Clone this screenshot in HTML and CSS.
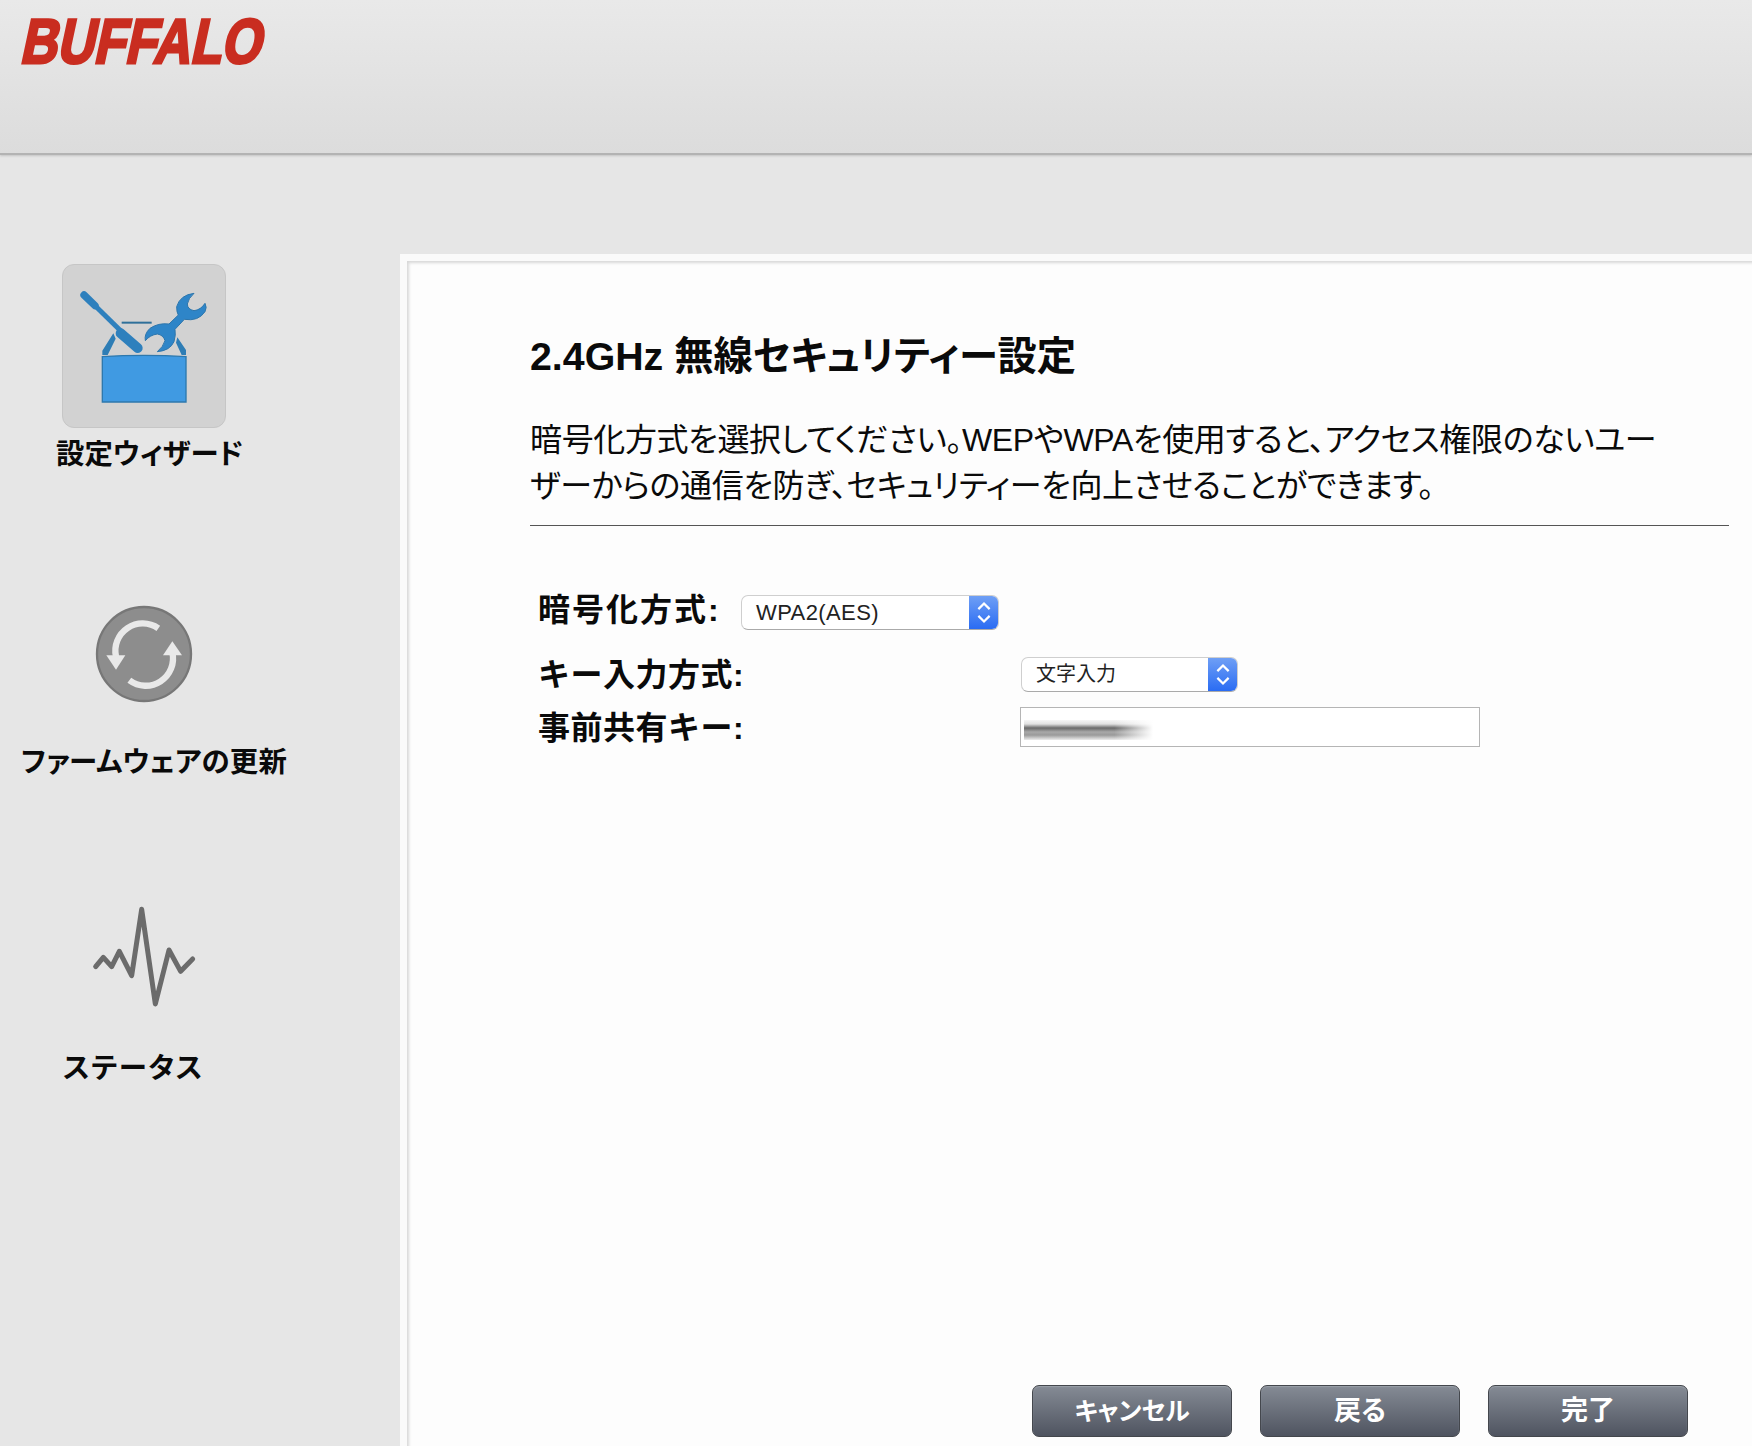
FILE: index.html
```html
<!DOCTYPE html>
<html lang="ja">
<head>
<meta charset="utf-8">
<title>2.4GHz 無線セキュリティー設定</title>
<link rel="stylesheet" href="styles.css">
</head>
<body>
<header class="topbar"><span class="logo">BUFFALO</span></header>
<div class="main">
  <nav class="sidebar">
    <div class="nav-item nav-wizard">
      <div class="icon-tile">
        <svg class="icon" viewBox="-21 -45 486 486" width="162" height="162">
          <defs><filter id="soft"><feGaussianBlur stdDeviation="1.6"/></filter></defs>
          <g filter="url(#soft)">
            <path d="M97 230Q222 222 348 230V366H97Z" fill="#3f9ae2" stroke="#2d78ad" stroke-width="4"/>
            <path d="M97 225V212L130 160L137 176L113 225Z M348 225V210L322 172L318 188L335 225Z" fill="#2f7db5"/>
            <path d="M155 128H245" stroke="#2f6f9a" stroke-width="6" fill="none"/>
            <path d="M42 45L75 77" stroke="#2f80bd" stroke-width="22" stroke-linecap="round"/>
            <path d="M70 72L155 155" stroke="#2f80bd" stroke-width="15"/>
            <path d="M152 160L203 204" stroke="#2f80bd" stroke-width="30" stroke-linecap="round"/>
            <path d="M372 40Q330 45 320 80Q320 98 325 105L297 132Q265 128 240 145Q222 162 226 182Q240 165 262 162Q280 165 285 182Q280 200 262 215Q300 212 312 185Q318 165 315 148L343 118Q385 125 405 95Q412 82 405 70Q392 90 372 92Q352 88 352 72Q355 55 372 40Z" fill="#2f85c8" stroke="#2c75ab" stroke-width="3"/>
          </g>
        </svg>
      </div>
      <div class="nav-label label-wizard">設定ウィザード</div>
    </div>
    <div class="nav-item nav-firmware">
      <div class="icon-plain">
        <svg class="icon" viewBox="249 37 306 306" width="102" height="102">
          <circle cx="402" cy="190" r="141" fill="#8d8d8d" stroke="#777" stroke-width="7"/>
          <path d="M445 113A82 82 0 0 0 318 198" stroke="#e9e9e9" stroke-width="19" fill="none"/>
          <path d="M289 194H346L318 237Z" fill="#e9e9e9"/>
          <path d="M358 269A82 82 0 0 0 487 185" stroke="#e9e9e9" stroke-width="19" fill="none"/>
          <path d="M459 194H516L487 152Z" fill="#e9e9e9"/>
        </svg>
      </div>
      <div class="nav-label label-firmware">ファームウェアの更新</div>
    </div>
    <div class="nav-item nav-status">
      <div class="icon-plain">
        <svg class="icon" viewBox="120 50 324 312" width="108" height="104">
          <path d="M137 238L160 210L185 238L208 192L245 265L275 66L316 350L357 188L392 252L428 215" fill="none" stroke="#6b6b6b" stroke-width="15" stroke-linecap="round" stroke-linejoin="round"/>
        </svg>
      </div>
      <div class="nav-label label-status">ステータス</div>
    </div>
  </nav>
  <main class="panel">
    <h1 class="title">2.4GHz 無線セキュリティー設定</h1>
    <p class="lead">暗号化方式を選択してください。WEPやWPAを使用すると、アクセス権限のないユーザーからの通信を防ぎ、セキュリティーを向上させることができます。</p>
    <hr class="rule">
    <div class="form">
      <div class="row row-first">
        <span class="field-label field-short">暗号化方式:</span>
        <div class="select select-wide"><span class="select-text select-text-latin">WPA2(AES)</span><span class="stepper"><svg viewBox="0 0 16 24" width="18" height="27"><path d="M3 9L8 4L13 9M3 15L8 20L13 15" fill="none" stroke="#fff" stroke-width="2"/></svg></span></div>
      </div>
      <div class="row row-second">
        <span class="field-label field-fixed">キー入力方式:</span>
        <div class="select select-narrow"><span class="select-text select-text-cjk">文字入力</span><span class="stepper"><svg viewBox="0 0 16 24" width="18" height="27"><path d="M3 9L8 4L13 9M3 15L8 20L13 15" fill="none" stroke="#fff" stroke-width="2"/></svg></span></div>
      </div>
      <div class="row row-third">
        <span class="field-label field-fixed">事前共有キー:</span>
        <div class="key-input"><span class="redacted"></span></div>
      </div>
    </div>
    <div class="actions">
      <button class="btn btn-long">キャンセル</button>
      <button class="btn">戻る</button>
      <button class="btn">完了</button>
    </div>
  </main>
</div>
</body>
</html>
```
FILE: styles.css
```css
* { box-sizing: border-box; }
html, body { margin: 0; height: 100%; }
body {
  width: 1752px;
  height: 1446px;
  overflow: hidden;
  background: #e6e6e6;
  font-family: "Liberation Sans", "Noto Sans CJK JP", sans-serif;
  color: #0a0a0a;
  display: flex;
  flex-direction: column;
}
.topbar {
  height: 155px;
  flex: none;
  padding: 8px 0 0 16px;
  background: linear-gradient(#e9e9e9, #dcdcdc);
  border-bottom: 2px solid #b3b3b3;
  box-shadow: 0 1px 2px #c4c4c4;
}
.logo {
  display: inline-block;
  font: bold 63px/66px "Liberation Sans", sans-serif;
  color: #c92d20;
  -webkit-text-stroke: 3px #c92d20;
  transform-origin: 0 50%;
  transform: translateX(8px) skewX(-12deg) scaleX(.81);
}
.main { flex: 1; display: flex; min-height: 0; padding-top: 99px; }
.sidebar { width: 400px; flex: none; padding-top: 10px; }
.nav-item { width: 400px; }
.nav-firmware { margin-top: 98px; }
.nav-status { margin-top: 92px; }
.icon-tile {
  width: 164px;
  height: 164px;
  margin-left: 62px;
  background: #d2d2d2;
  border: 1px solid #c6c6c6;
  border-radius: 12px;
  display: flex;
}
.icon-plain {
  width: 164px;
  height: 164px;
  margin-left: 62px;
  display: flex;
  align-items: center;
  justify-content: center;
}
.icon { display: block; }
.nav-label {
  font-size: 28.4px;
  line-height: 40px;
  font-weight: 700;
  font-feature-settings: "palt";
  margin-top: 6px;
  white-space: nowrap;
}
.label-wizard { padding-left: 56px; }
.label-firmware { padding-left: 21px; margin-top: 6px; letter-spacing: .2px; }
.label-status { padding-left: 63px; margin-top: 10px; letter-spacing: 1.6px; }
.panel {
  width: 1352px;
  flex: none;
  display: flex;
  flex-direction: column;
  background: #fdfdfd;
  border: solid #fafafa;
  border-width: 7px 0 0 7px;
  box-shadow: inset 3px 3px 3px -1px #d8d8d8;
  padding: 70px 23px 9px 123px;
}
.title {
  margin: 0;
  font-size: 39.3px;
  line-height: 50px;
  font-weight: 700;
  font-feature-settings: "palt";
}
.lead {
  margin: 36px 0 0;
  width: 1140px;
  font-size: 32px;
  line-height: 46px;
  font-feature-settings: "palt";
  letter-spacing: -.35px;
}
.rule { margin: 16px 0 0; border: 0; height: 1px; background: #555; }
.form { padding: 66px 0 0 8px; }
.row { display: flex; align-items: center; }
.row-first { height: 40px; }
.row-second { height: 40px; margin-top: 22px; }
.row-third { height: 40px; margin-top: 13px; }
.field-label {
  font-size: 32px;
  font-weight: 700;
  white-space: nowrap;
}
.field-short { width: 203px; letter-spacing: 2px; margin-bottom: 10px; }
.field-fixed { width: 482px; letter-spacing: .5px; margin-bottom: 4px; }
.select {
  height: 35px;
  display: flex;
  justify-content: space-between;
  background: #fff;
  border: 1px solid #cfcfcf;
  border-bottom-color: #aaa;
  border-radius: 7px;
  overflow: hidden;
}
.select-wide { width: 258px; }
.select-narrow { width: 217px; margin-left: 1px; }
.select-text { font-size: 22px; line-height: 33px; padding-left: 14px; color: #222; }
.select-text-latin { letter-spacing: .4px; }
.select-text-cjk { font-size: 20px; }
.stepper {
  width: 29px;
  background: linear-gradient(#6f9ff5, #2a6cf3);
  display: flex;
  align-items: center;
  justify-content: center;
}
.key-input {
  width: 460px;
  height: 40px;
  background: #fff;
  border: 1px solid #b5b5b5;
  padding: 12px 0 0 3px;
  overflow: hidden;
}
.redacted {
  display: block;
  width: 129px;
  height: 20px;
  background:
    linear-gradient(90deg, rgba(255,255,255,0) 70%, #fff 100%),
    linear-gradient(#f6f6f6 0, #e2e2e2 20%, #6a6a6a 40%, #a8a8a8 60%, #9a9a9a 75%, #ececec 100%);
}
.actions { margin-top: auto; display: flex; justify-content: flex-end; gap: 28px; padding-right: 41px; }
.btn {
  width: 200px;
  height: 52px;
  border: 1px solid #44474d;
  border-radius: 7px;
  background: linear-gradient(#858b95, #4f5460);
  box-shadow: inset 0 1px 1px #9aa0a8;
  color: #fff;
  font: 700 27px/1 "Liberation Sans", "Noto Sans CJK JP", sans-serif;
  font-feature-settings: "palt";
}
.btn-long { font-size: 25px; }
```
